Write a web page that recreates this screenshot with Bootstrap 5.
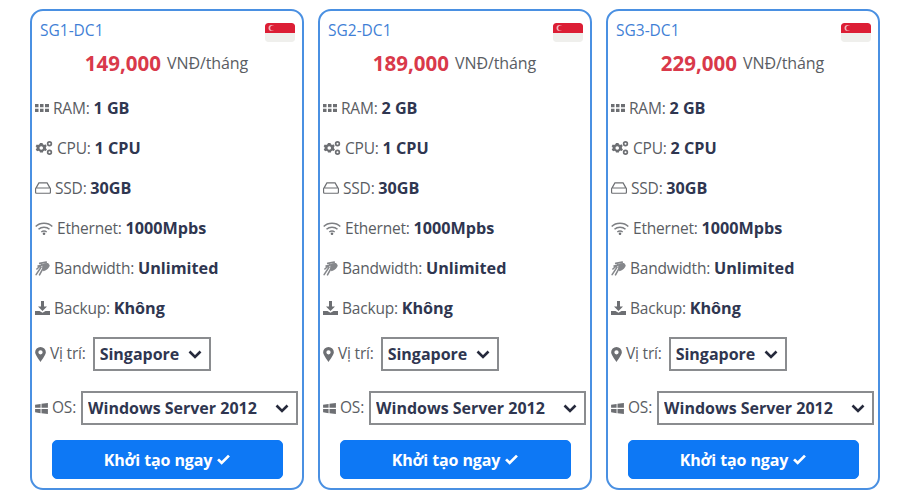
<!DOCTYPE html>
<html lang="vi"><head><meta charset="utf-8"><title>VPS</title>
<link rel="stylesheet" href="https://cdn.jsdelivr.net/npm/bootstrap@5.3.0/dist/css/bootstrap.min.css">
<style>
html,body{height:500px;overflow:hidden}
body{background:#fff;font-family:"Open Sans","Noto Sans",sans-serif;font-size:15.500px;color:#5a5d63}
.plans{padding:9px 20px 0 30px;gap:14px}
.plan{width:274px;height:481px;border:2px solid #4a90e2;border-radius:13px;padding:0 4px 0 3px;flex:none}
.plan-head{height:33px;padding:10px 3px 0 5px}
.plan-name{font-size:15.500px;line-height:18px;color:#3f7fd6}
.sg-flag{width:30px;height:19px;margin-top:2px;border-radius:3px;display:block}
.price-line{height:44px;padding-bottom:6px;font-size:16px;letter-spacing:-.1px}
.price-num{font-size:20.500px;font-weight:700;color:#d9394a;margin-right:2px;letter-spacing:0}
.spec{height:40px;gap:4px;white-space:nowrap;letter-spacing:-.2px}
.spec b{font-weight:700;font-size:16.200px;color:#2f3650;letter-spacing:0}
.spec svg{flex:none;fill:#6d6f73}
.pick-row{height:34px;gap:4px;letter-spacing:-.2px;white-space:nowrap}
.pick-loc{margin-top:9px}
.pick-os{margin-top:20px}
.pick-row svg{flex:none;fill:#6d6f73}
select.plan-select{border:2px solid #8a8c8f;border-radius:0;height:34px;padding:0 0 0 5px;font-family:inherit;font-size:16px;font-weight:700;letter-spacing:0;color:#2f3650;background-color:#fff;background-size:14px 11px;background-position:right 7px center;background-repeat:no-repeat;background-image:url("data:image/svg+xml,%3Csvg xmlns='http://www.w3.org/2000/svg' viewBox='0 0 14 11'%3E%3Cpath d='M1.500 2.500 7 8l5.500-5.500' fill='none' stroke='%23262a3c' stroke-width='2.600'/%3E%3C/svg%3E");box-shadow:none}
.sel-loc{width:118px;margin-left:3px}
.sel-os{width:219px;margin-left:1px}
.go-btn{display:flex;align-items:center;justify-content:center;gap:4px;width:231px;height:39px;margin:15px auto 0 17px;background:#0d78f5;border-color:#0d78f5;border-radius:5px;font-size:16px;font-weight:700;color:#fff;padding:0;letter-spacing:-.1px}
</style></head><body>
<svg width="0" height="0" class="d-block position-absolute"><defs>
<symbol id="i-ram" viewBox="0 0 14 8"><path d="M0 0h3.500v3.300H0zM5 0h3.500v3.300H5zM10 0h4v3.300h-4zM0 4.700h3.500V8H0zM5 4.700h3.500V8H5zM10 4.700h4V8h-4z"/></symbol>
<symbol id="i-cpu" viewBox="0 0 18 14"><path fill-rule="evenodd" d="M5 2h2.500l.4 1.300 1.300.6 1.200-.6 1.400 1.700-.9 1 .1 1.400 1 .9-1.200 1.800-1.300-.5-1.300.7-.3 1.300H5l-.4-1.300-1.300-.6-1.200.6L.7 8.600l.9-1V6.200l-1-.9 1.200-1.800 1.300.5 1.300-.7zM6.200 5.200a1.800 1.800 0 1 0 .1 3.600 1.800 1.800 0 0 0-.1-3.600z"/><path fill-rule="evenodd" d="M14.500 0a2.700 2.700 0 1 1 0 5.400 2.700 2.700 0 0 1 0-5.400zm0 1.700a1 1 0 1 0 0 2 1 1 0 0 0 0-2zM14.500 8.600a2.700 2.700 0 1 1 0 5.400 2.700 2.700 0 0 1 0-5.400zm0 1.700a1 1 0 1 0 0 2 1 1 0 0 0 0-2z"/></symbol>
<symbol id="i-hdd" viewBox="0 0 18 13"><path fill-rule="evenodd" d="M4 0h10l4 7v4.500a1.500 1.500 0 0 1-1.500 1.500h-15A1.500 1.500 0 0 1 0 11.500V7zm.8 1.300L2.300 5.800h13.400l-2.500-4.500zM1.300 7.200v4.100c0 .3.200.5.500.5h14.400c.3 0 .5-.2.500-.5V7.200z"/></symbol>
<symbol id="i-wifi" viewBox="0 0 18 13"><path fill="none" stroke-width="1.500" d="M.7 4.500C5 .2 13 .2 17.300 4.500M3.500 7.300c3-2.800 8-2.800 11 0M6.300 10C7.800 8.800 10.200 8.800 11.700 10" style="stroke:#7d7f83"/><circle cx="9" cy="11.700" r="1.300"/></symbol>
<symbol id="i-hand" viewBox="0 0 16 16"><path fill="none" stroke-width="1.700" stroke-linecap="round" d="M5 2.500 12 1.200M3.300 5.300 13.600 3M2 8.500l5-4.500M1.200 14.500 6.500 6.500M4.800 14.800 8 8.800" style="stroke:#85878b"/><path d="M8 3.500c2.500-1.500 7-1.500 7.500 1 .4 2.500-3 5-6.500 6.500L7.500 8z" style="fill:#85878b"/></symbol>
<symbol id="i-down" viewBox="0 0 15 14"><path d="M6 0h3v5.500h3L7.500 10 3 5.500h3zM0 10h4.500l3 1.800 3-1.800H15v4H0z"/></symbol>
<symbol id="i-pin" viewBox="0 0 10 14"><path fill-rule="evenodd" d="M5 0a5 5 0 0 1 5 5c0 2.200-3 6.300-5 9-2-2.700-5-6.800-5-9a5 5 0 0 1 5-5zm0 3a2 2 0 1 0 0 4 2 2 0 0 0 0-4z"/></symbol>
<symbol id="i-win" viewBox="0 0 14 12"><path d="M0 2 6 1v4.300H0zM7 .8 14 0v5.300H7zM0 6.500h6v4.600l-6-.9zM7 6.500h7V12l-7-.9z"/></symbol>
<symbol id="i-check" viewBox="0 0 14 11"><path d="M1 5.800 2.800 4l2.500 2.500L11.200.5 13 2.300 5.300 10z"/></symbol>
<symbol id="i-flag" viewBox="0 0 30 19"><path d="M3 0h24a3 3 0 0 1 3 3v7H0V3a3 3 0 0 1 3-3z" fill="#dc1e35"/><path d="M0 10h30v6a3 3 0 0 1-3 3H3a3 3 0 0 1-3-3z" fill="#efefec"/><circle cx="6.500" cy="5" r="3" fill="#f0b6bc"/><circle cx="7.800" cy="5" r="2.600" fill="#dc1e35"/></symbol>
</defs></svg>

<main class="plans d-flex">

<section class="plan d-flex flex-column flex-shrink-0 bg-white">
<div class="plan-head d-flex justify-content-between align-items-start"><span class="plan-name">SG1-DC1</span><svg class="sg-flag"><use href="#i-flag"/></svg></div>
<div class="price-line d-flex align-items-center justify-content-center"><span class="price-num">149,000</span>&nbsp;VNĐ/tháng</div>
<div class="spec d-flex align-items-center"><svg width="14" height="8"><use href="#i-ram"/></svg><span>RAM: <b>1 GB</b></span></div>
<div class="spec d-flex align-items-center"><svg width="18" height="14"><use href="#i-cpu"/></svg><span>CPU: <b>1 CPU</b></span></div>
<div class="spec d-flex align-items-center"><svg width="16" height="12"><use href="#i-hdd"/></svg><span>SSD: <b>30GB</b></span></div>
<div class="spec d-flex align-items-center"><svg width="18" height="13"><use href="#i-wifi"/></svg><span>Ethernet: <b>1000Mpbs</b></span></div>
<div class="spec d-flex align-items-center"><svg width="15" height="15"><use href="#i-hand"/></svg><span>Bandwidth: <b>Unlimited</b></span></div>
<div class="spec d-flex align-items-center"><svg width="15" height="14"><use href="#i-down"/></svg><span>Backup: <b>Không</b></span></div>
<div class="pick-row pick-loc d-flex align-items-center"><svg width="11" height="15"><use href="#i-pin"/></svg><span>Vị trí:</span><select class="form-select plan-select sel-loc" aria-label="Vị trí"><option>Singapore</option></select></div>
<div class="pick-row pick-os d-flex align-items-center"><svg width="13" height="11"><use href="#i-win"/></svg><span>OS:</span><select class="form-select plan-select sel-os" aria-label="OS"><option>Windows Server 2012</option></select></div>
<button type="button" class="btn btn-primary go-btn">Khởi tạo ngay <svg width="15" height="12" fill="#fff"><use href="#i-check"/></svg></button>
</section>

<section class="plan d-flex flex-column flex-shrink-0 bg-white">
<div class="plan-head d-flex justify-content-between align-items-start"><span class="plan-name">SG2-DC1</span><svg class="sg-flag"><use href="#i-flag"/></svg></div>
<div class="price-line d-flex align-items-center justify-content-center"><span class="price-num">189,000</span>&nbsp;VNĐ/tháng</div>
<div class="spec d-flex align-items-center"><svg width="14" height="8"><use href="#i-ram"/></svg><span>RAM: <b>2 GB</b></span></div>
<div class="spec d-flex align-items-center"><svg width="18" height="14"><use href="#i-cpu"/></svg><span>CPU: <b>1 CPU</b></span></div>
<div class="spec d-flex align-items-center"><svg width="16" height="12"><use href="#i-hdd"/></svg><span>SSD: <b>30GB</b></span></div>
<div class="spec d-flex align-items-center"><svg width="18" height="13"><use href="#i-wifi"/></svg><span>Ethernet: <b>1000Mpbs</b></span></div>
<div class="spec d-flex align-items-center"><svg width="15" height="15"><use href="#i-hand"/></svg><span>Bandwidth: <b>Unlimited</b></span></div>
<div class="spec d-flex align-items-center"><svg width="15" height="14"><use href="#i-down"/></svg><span>Backup: <b>Không</b></span></div>
<div class="pick-row pick-loc d-flex align-items-center"><svg width="11" height="15"><use href="#i-pin"/></svg><span>Vị trí:</span><select class="form-select plan-select sel-loc" aria-label="Vị trí"><option>Singapore</option></select></div>
<div class="pick-row pick-os d-flex align-items-center"><svg width="13" height="11"><use href="#i-win"/></svg><span>OS:</span><select class="form-select plan-select sel-os" aria-label="OS"><option>Windows Server 2012</option></select></div>
<button type="button" class="btn btn-primary go-btn">Khởi tạo ngay <svg width="15" height="12" fill="#fff"><use href="#i-check"/></svg></button>
</section>

<section class="plan d-flex flex-column flex-shrink-0 bg-white">
<div class="plan-head d-flex justify-content-between align-items-start"><span class="plan-name">SG3-DC1</span><svg class="sg-flag"><use href="#i-flag"/></svg></div>
<div class="price-line d-flex align-items-center justify-content-center"><span class="price-num">229,000</span>&nbsp;VNĐ/tháng</div>
<div class="spec d-flex align-items-center"><svg width="14" height="8"><use href="#i-ram"/></svg><span>RAM: <b>2 GB</b></span></div>
<div class="spec d-flex align-items-center"><svg width="18" height="14"><use href="#i-cpu"/></svg><span>CPU: <b>2 CPU</b></span></div>
<div class="spec d-flex align-items-center"><svg width="16" height="12"><use href="#i-hdd"/></svg><span>SSD: <b>30GB</b></span></div>
<div class="spec d-flex align-items-center"><svg width="18" height="13"><use href="#i-wifi"/></svg><span>Ethernet: <b>1000Mpbs</b></span></div>
<div class="spec d-flex align-items-center"><svg width="15" height="15"><use href="#i-hand"/></svg><span>Bandwidth: <b>Unlimited</b></span></div>
<div class="spec d-flex align-items-center"><svg width="15" height="14"><use href="#i-down"/></svg><span>Backup: <b>Không</b></span></div>
<div class="pick-row pick-loc d-flex align-items-center"><svg width="11" height="15"><use href="#i-pin"/></svg><span>Vị trí:</span><select class="form-select plan-select sel-loc" aria-label="Vị trí"><option>Singapore</option></select></div>
<div class="pick-row pick-os d-flex align-items-center"><svg width="13" height="11"><use href="#i-win"/></svg><span>OS:</span><select class="form-select plan-select sel-os" aria-label="OS"><option>Windows Server 2012</option></select></div>
<button type="button" class="btn btn-primary go-btn">Khởi tạo ngay <svg width="15" height="12" fill="#fff"><use href="#i-check"/></svg></button>
</section>

</main>
<script src="https://cdn.jsdelivr.net/npm/bootstrap@5.3.0/dist/js/bootstrap.bundle.min.js"></script>
</body></html>
